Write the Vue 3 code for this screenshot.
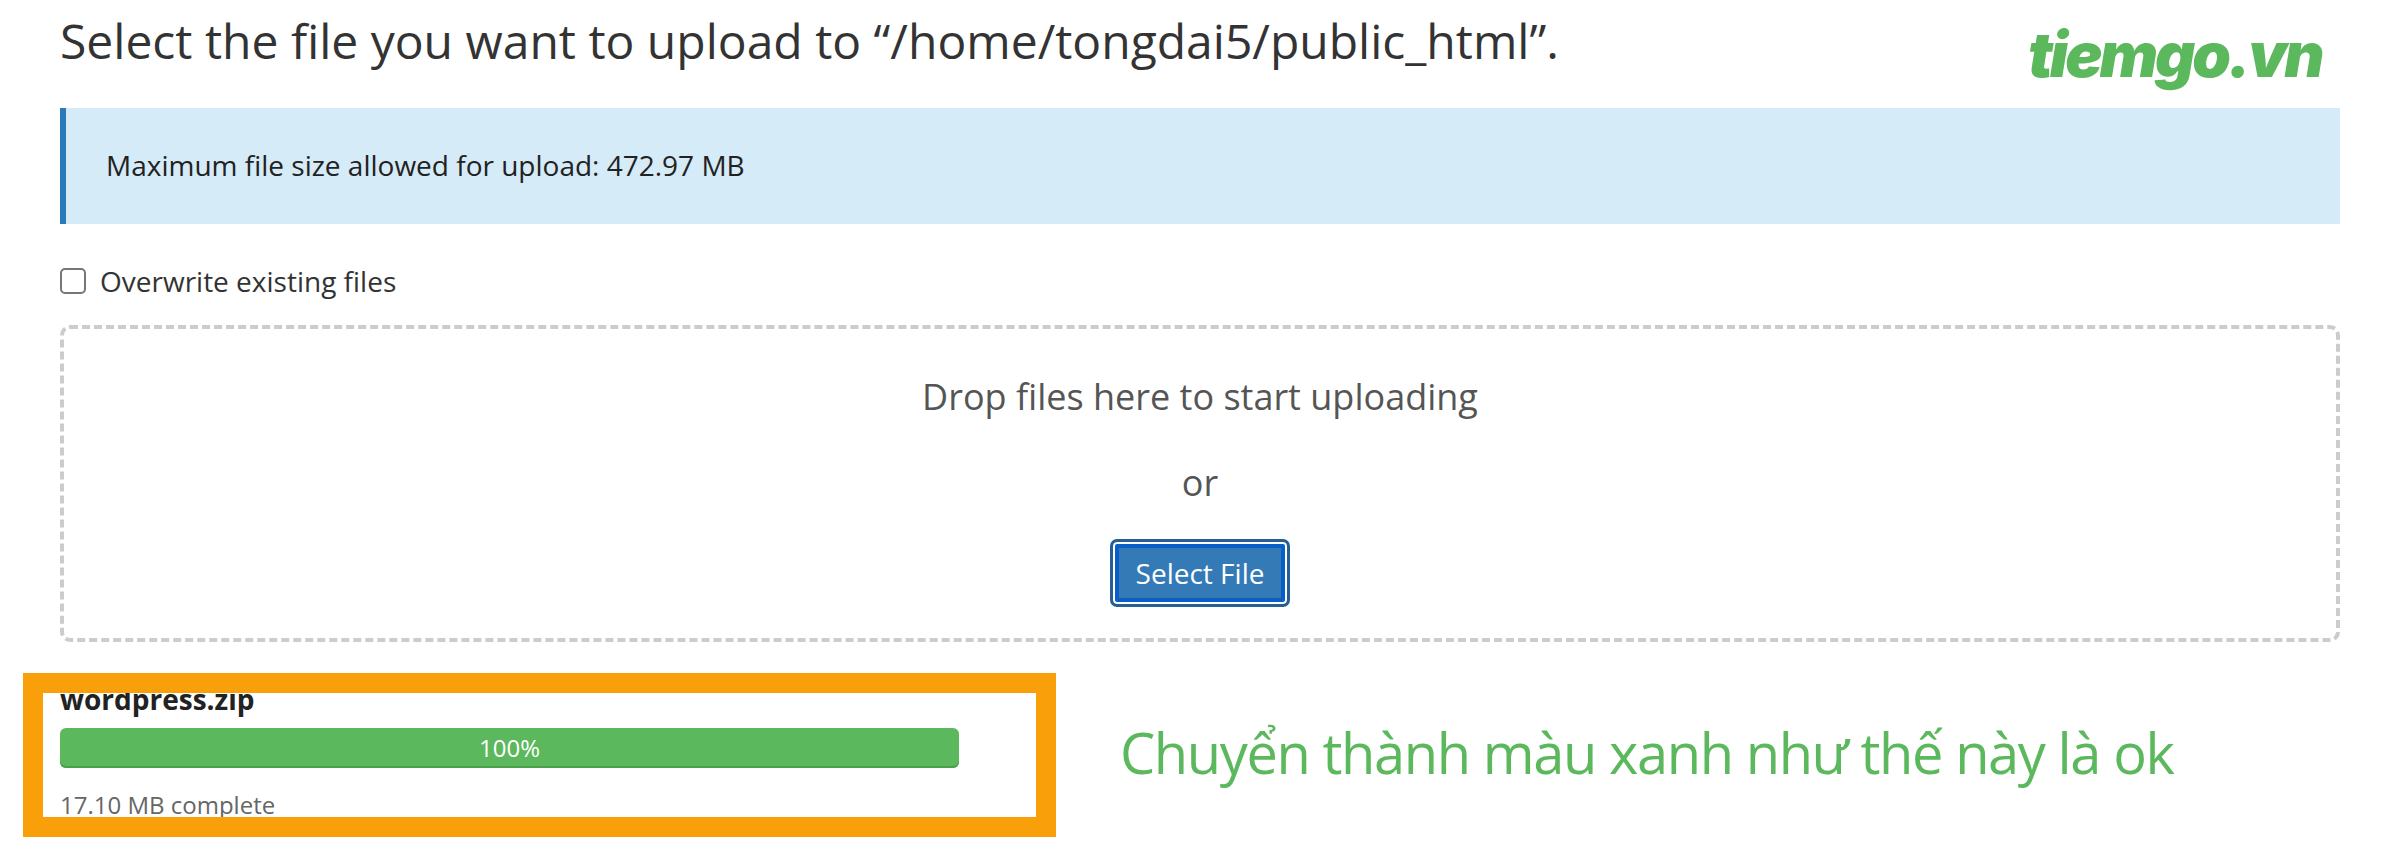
<script setup>
const maxSize = '472.97 MB'
const uploadDir = '/home/tongdai5/public_html'
</script>

<template>
  <div class="page">
    <div class="logo">tiemgo.vn</div>
    <h1 class="title">Select the file you want to upload to “{{ uploadDir }}”.</h1>

    <div class="alert"><span class="alert-text">Maximum file size allowed for upload: {{ maxSize }}</span></div>

    <label class="overwrite">
      <span class="check"></span>
      <span>Overwrite existing files</span>
    </label>

    <div class="dropzone">
      <div class="drop-text">Drop files here to start uploading</div>
      <div class="drop-text or">or</div>
      <button class="select-btn" type="button">Select File</button>
    </div>

    <div class="bottom">
      <div class="highlight">
        <div class="file-name">wordpress.zip</div>
        <div class="bar">100%</div>
        <div class="file-status">17.10 MB complete</div>
      </div>
      <div class="note">Chuyển thành màu xanh như thế này là ok</div>
    </div>
  </div>
</template>

<style>
html, body {
  background: #fff;
  overflow: hidden;
}
</style>

<style scoped>
.page {
  position: relative;
  width: 2406px;
  height: 856px;
  box-sizing: border-box;
  padding: 8px 66px 0 60px;
  font-family: "Open Sans", "Noto Sans", sans-serif;
  color: #333;
  overflow: hidden;
}
.logo {
  position: absolute;
  left: 2028px;
  top: 15px;
  font-family: Inter, sans-serif;
  font-weight: 900;
  font-style: italic;
  font-size: 62px;
  line-height: 80px;
  letter-spacing: -3px;
  color: #5cb85c;
}
.title {
  margin: 0;
  font-size: 48px;
  font-weight: 400;
  line-height: 66px;
}
.alert {
  margin-top: 34px;
  height: 116px;
  box-sizing: border-box;
  display: flex;
  align-items: center;
  padding-left: 40px;
  border-left: 6px solid #2a7ab9;
  background: #d6ebf8;
  font-size: 28px;
  color: #222;
}
.alert-text {
  margin-top: -2px;
}
.overwrite {
  margin-top: 38px;
  height: 38px;
  display: flex;
  align-items: center;
  gap: 14px;
  font-size: 28px;
  color: #333;
}
.check {
  width: 26px;
  height: 26px;
  box-sizing: border-box;
  border: 2px solid #767676;
  border-radius: 5px;
  background: #fff;
}
.dropzone {
  margin-top: 25px;
  height: 317px;
  box-sizing: border-box;
  border: 4px dashed #ccc;
  border-radius: 10px;
  padding-top: 48px;
  display: flex;
  flex-direction: column;
  align-items: center;
}
.drop-text {
  font-size: 36px;
  line-height: 40px;
  color: #555;
}
.or {
  margin-top: 46px;
}
.select-btn {
  margin-top: 36px;
  width: 180px;
  height: 68px;
  box-sizing: border-box;
  border: 3px solid #255f95;
  border-radius: 7px;
  background: #337ab7;
  box-shadow: inset 0 0 0 2px #fff, inset 0 0 0 6px #0a5ec7;
  color: #fff;
  font-family: inherit;
  font-size: 28px;
  padding: 0;
}
.bottom {
  margin: 31px 0 0 -37px;
  display: flex;
  align-items: center;
}
.highlight {
  width: 1033px;
  height: 164px;
  box-sizing: border-box;
  border: 20px solid #f89f0a;
  padding: 0 0 0 17px;
  overflow: hidden;
}
.file-name {
  margin-top: -13px;
  font-size: 28px;
  font-weight: 700;
  line-height: 38px;
  color: #222;
}
.bar {
  margin-top: 10px;
  width: 899px;
  height: 40px;
  box-sizing: border-box;
  border-radius: 6px;
  background: #5cb85c;
  box-shadow: inset 0 -2px 0 #4a9f4a;
  color: #fff;
  font-size: 24px;
  line-height: 40px;
  text-align: center;
}
.file-status {
  margin-top: 19px;
  font-size: 24px;
  line-height: 36px;
  color: #666;
}
.note {
  margin: -6px 0 0 64px;
  font-size: 56px;
  line-height: 72px;
  letter-spacing: -1.4px;
  color: #5cb85c;
  white-space: nowrap;
}
</style>
